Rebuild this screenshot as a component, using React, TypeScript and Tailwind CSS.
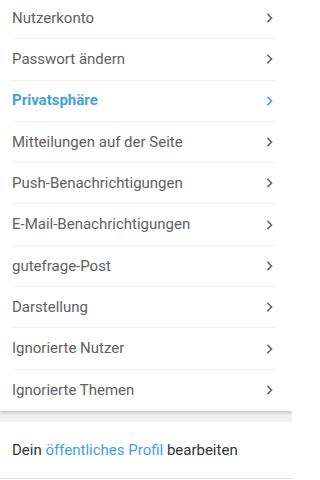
import React from "react";

const items = [
  "Nutzerkonto",
  "Passwort ändern",
  "Privatsphäre",
  "Mitteilungen auf der Seite",
  "Push-Benachrichtigungen",
  "E-Mail-Benachrichtigungen",
  "gutefrage-Post",
  "Darstellung",
  "Ignorierte Nutzer",
  "Ignorierte Themen",
];

function Chevron({ active }: { active: boolean }) {
  return (
    <svg width="8" height="10" viewBox="0 0 8 10" fill="none">
      <path
        d="M2 1.5 L5.5 5 L2 8.5"
        stroke={active ? "#3fa3dc" : "#666666"}
        strokeWidth="1.6"
        strokeLinecap="square"
      />
    </svg>
  );
}

export default function App() {
  return (
    <div className="w-[292px] h-[480px] overflow-hidden bg-white" style={{ fontFamily: "Roboto, 'Liberation Sans', sans-serif" }}>
      <div className="bg-white shadow-[0_2px_3px_rgba(0,0,0,0.18)] relative z-10">
        <ul className="pl-3 pr-[17px] -mt-[2px]">
          {items.map((t, i) => {
            const active = t === "Privatsphäre";
            const last = i === items.length - 1;
            return (
              <li
                key={t}
                className={`flex items-center justify-between h-[41.3px] text-[15px] ${last ? "" : "border-b border-[#f0f0f0]"} ${active ? "text-[#3fa3dc] font-bold" : "text-[#616161]"}`}
              >
                <span>{t}</span>
                <span className="pr-[1px]"><Chevron active={active} /></span>
              </li>
            );
          })}
        </ul>
      </div>
      <div className="h-[11px] bg-[#f2f2f2]" />
      <div className="h-[57px] flex items-center px-3 text-[15px] text-[#333333] border-b border-[#dcdcdc]">
        <span>
          Dein <span className="text-[#3fa3dc]">öffentliches Profil</span> bearbeiten
        </span>
      </div>
    </div>
  );
}
